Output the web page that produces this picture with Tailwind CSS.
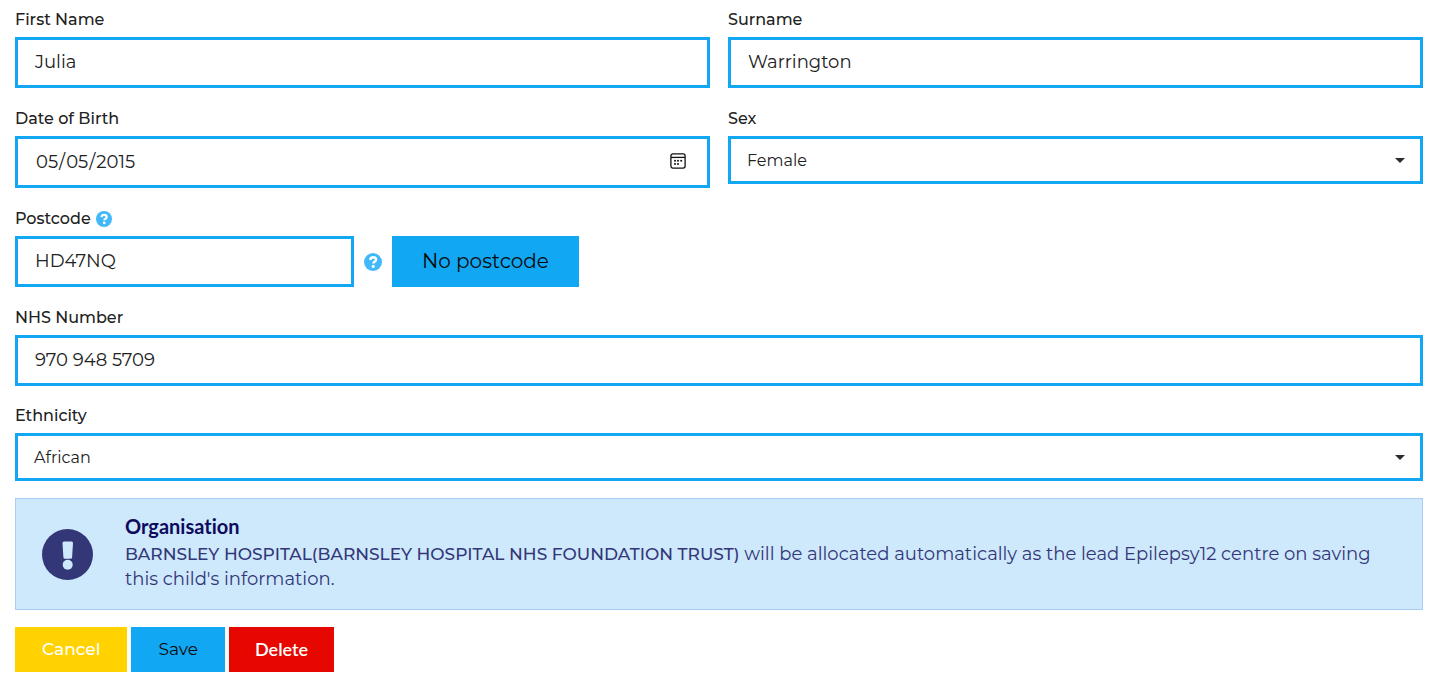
<!DOCTYPE html>
<html lang="en">
<head>
<meta charset="utf-8">
<meta name="viewport" content="width=device-width, initial-scale=1">
<title>Child details</title>
<script src="https://cdn.jsdelivr.net/npm/@tailwindcss/browser@4"></script>
</head>
<body class="bg-white font-[Montserrat,Inter,sans-serif] text-lg text-[#212121]">
<svg class="hidden" aria-hidden="true">
  <symbol id="help" viewBox="0 0 16 16">
    <circle cx="8" cy="8" r="8" fill="#41b8f9"/>
    <path d="M5.500 6.200C5.700 4.600 6.600 3.800 8.100 3.800c1.500 0 2.600.9 2.600 2.200 0 1.800-2.400 1.700-2.400 3.300" fill="none" stroke="#fff" stroke-width="2.200"/>
    <circle cx="8.200" cy="11.900" r="1.400" fill="#fff"/>
  </symbol>
  <symbol id="caret" viewBox="0 0 10 5"><path d="M0 0h10L5 5z" fill="#2b2b2b"/></symbol>
</svg>
<form class="pt-[10px] pr-[14px] pb-4 pl-[15px]">
  <div class="mb-[21px] grid grid-cols-2 gap-[18px]">
    <div>
      <label for="first" class="mb-[7px] block text-base leading-5 font-medium">First Name</label>
      <input id="first" type="text" value="Julia" class="block h-[51px] w-full border-3 border-[#12a7f3] px-[17px] pb-px">
    </div>
    <div>
      <label for="surname" class="mb-[7px] block text-base leading-5 font-medium">Surname</label>
      <input id="surname" type="text" value="Warrington" class="block h-[51px] w-full border-3 border-[#12a7f3] px-[17px] pb-px">
    </div>
  </div>
  <div class="mb-[21px] grid grid-cols-2 gap-[18px]">
    <div>
      <label for="dob" class="mb-[7px] block text-base leading-5 font-medium">Date of Birth</label>
      <div class="relative">
        <input id="dob" type="date" value="2015-05-05" class="block h-[52px] w-full border-3 border-[#12a7f3] px-[17px] [&::-webkit-calendar-picker-indicator]:opacity-0">
        <svg class="pointer-events-none absolute top-[17px] right-6 size-4" viewBox="0 0 16 16" fill="none" stroke="#111" stroke-width="1.3" aria-hidden="true">
          <rect x=".9" y=".9" width="14.2" height="14.2" rx="2"/>
          <path d="M1 4.4h14"/>
          <g fill="#111" stroke="none"><circle cx="5" cy="7.7" r="1"/><circle cx="8" cy="7.7" r="1"/><circle cx="11.2" cy="7.7" r="1"/><circle cx="5" cy="10.9" r="1"/><circle cx="8" cy="10.9" r="1"/></g>
        </svg>
      </div>
    </div>
    <div>
      <label for="sex" class="mb-[7px] block text-base leading-5 font-medium">Sex</label>
      <div class="relative">
        <select id="sex" class="block h-12 w-full appearance-none border-3 border-[#12a7f3] px-4 pt-[2px] text-base"><option>Female</option><option>Male</option></select>
        <svg class="pointer-events-none absolute top-[22px] right-[18px] h-[5px] w-[10px]" aria-hidden="true"><use href="#caret"/></svg>
      </div>
    </div>
  </div>
  <div class="mb-[21px]">
    <div class="mb-[7px] flex items-center gap-[5px]">
      <label for="postcode" class="text-base leading-5 font-medium">Postcode</label>
      <svg class="size-4" role="img" aria-label="Help"><use href="#help"/></svg>
    </div>
    <div class="flex items-center">
      <input id="postcode" type="text" value="HD47NQ" class="h-[51px] w-[339px] border-3 border-[#12a7f3] px-[17px] pb-[2px]">
      <svg class="mx-[10px] size-[18px]" role="img" aria-label="Help"><use href="#help"/></svg>
      <button type="button" class="h-[51px] bg-[#12a7f3] px-[30px] pb-px text-xl text-[#0a0a0a]">No postcode</button>
    </div>
  </div>
  <div class="mb-5">
    <label for="nhs" class="mb-[7px] block text-base leading-5 font-medium">NHS Number</label>
    <input id="nhs" type="text" value="970 948 5709" class="block h-[51px] w-full border-3 border-[#12a7f3] px-[17px] pb-[2px]">
  </div>
  <div class="mb-[17px]">
    <label for="ethnicity" class="mb-[7px] block text-base leading-5 font-medium">Ethnicity</label>
    <div class="relative">
      <select id="ethnicity" class="block h-12 w-full appearance-none border-3 border-[#12a7f3] px-4 pt-[2px] text-base"><option>African</option></select>
      <svg class="pointer-events-none absolute top-[22px] right-[18px] h-[5px] w-[10px]" aria-hidden="true"><use href="#caret"/></svg>
    </div>
  </div>
  <section class="mb-[17px] flex min-h-28 items-center gap-8 border border-[#a9ccf2] bg-[#cee8fc] pr-10 pl-[26px] text-[#333777]">
    <svg class="size-[51px] shrink-0" viewBox="0 0 51 51" aria-hidden="true">
      <circle cx="25.5" cy="25.5" r="25.5" fill="#333777"/>
      <path d="M22 12.500h7.500a1.500 1.500 0 0 1 1.500 1.600l-.9 14.200a1.600 1.600 0 0 1-1.600 1.500h-5.500a1.600 1.600 0 0 1-1.600-1.500L20.500 14.100A1.500 1.500 0 0 1 22 12.500z" fill="#cee8fc"/>
      <circle cx="25.700" cy="35.800" r="5" fill="#cee8fc"/>
    </svg>
    <div class="pb-1">
      <h2 class="mb-[2px] font-[Lato,sans-serif] text-xl leading-[27px] font-bold text-[#0d0b5c] [font-variant-ligatures:none]">Organisation</h2>
      <p class="leading-[25px]"><strong class="text-[17px] font-medium">BARNSLEY HOSPITAL(BARNSLEY HOSPITAL NHS FOUNDATION TRUST)</strong> will be allocated automatically as the lead Epilepsy12 centre on saving this child's information.</p>
    </div>
  </section>
  <div class="flex gap-1">
    <button type="button" class="h-[45px] bg-[#ffd200] px-[27px] text-[17px] font-medium text-white">Cancel</button>
    <button type="submit" class="h-[45px] bg-[#12a7f3] px-[27px] text-[17px] text-[#0a0a0a]">Save</button>
    <button type="button" class="h-[45px] bg-[#e60700] px-[26px] pb-[2px] font-[Lato,sans-serif] font-semibold text-white">Delete</button>
  </div>
</form>
</body>
</html>
